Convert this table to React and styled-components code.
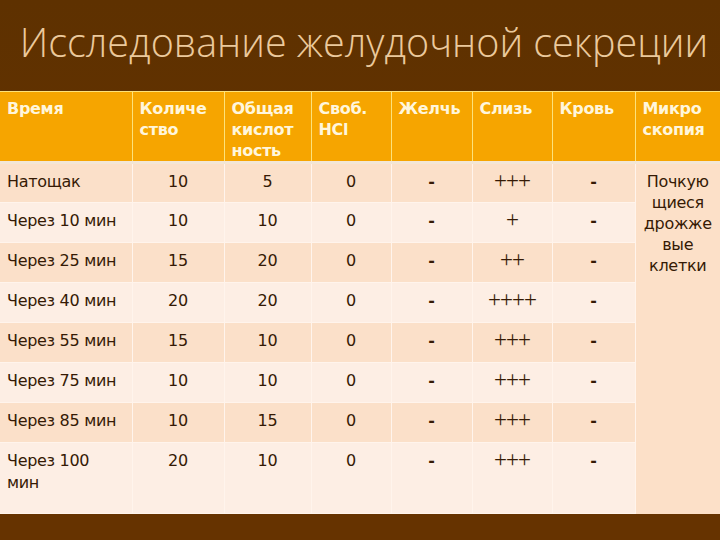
import React from 'react';
import styled, { createGlobalStyle } from 'styled-components';

const GlobalStyle = createGlobalStyle`
  html, body {
    margin: 0;
    padding: 0;
    background: #663300;
  }
`;

const Slide = styled.div`
  width: 720px;
  height: 540px;
  background: linear-gradient(180deg, #5e3100 0%, #663300 60%, #663300 100%);
  display: flex;
  flex-direction: column;
  overflow: hidden;
`;

const Title = styled.h1`
  margin: 0;
  height: 91px;
  display: flex;
  align-items: center;
  justify-content: center;
  padding: 0 0 8px 8px;
  box-sizing: border-box;
  white-space: nowrap;
  font-family: "Open Sans", "Liberation Sans", sans-serif;
  font-weight: 300;
  font-size: 39.5px;
  color: #ebc99c;
`;

const Table = styled.table`
  width: 720px;
  table-layout: fixed;
  border-collapse: collapse;
  font-family: "DejaVu Sans", "Liberation Sans", sans-serif;
`;

const HeadCell = styled.th`
  background: #f6a500;
  color: #fff6dc;
  font-size: 16px;
  font-weight: bold;
  text-align: left;
  vertical-align: top;
  line-height: 21px;
  height: 70px;
  padding: 6px 0 0 7px;
  box-sizing: border-box;
  border-left: 1.5px solid #fde27a;
  border-top: 1px solid #fde27a;
  border-bottom: 3px solid #f3e6d6;
  letter-spacing: -0.3px;
  white-space: nowrap;
  &:first-child {
    border-left: none;
  }
`;

const Row = styled.tr`
  background: ${p => (p.$alt ? '#fdeee4' : '#fbe0c9')};
`;

const Cell = styled.td`
  height: ${p => (p.$tall ? 71 : 40)}px;
  padding: ${p => (p.$plus ? 6 : 7)}px 0 0 ${p => (p.$left ? 7 : 0)}px;
  box-sizing: border-box;
  vertical-align: top;
  text-align: ${p => (p.$left ? 'left' : 'center')};
  color: #351a05;
  font-size: ${p => (p.$plus ? 23 : 16)}px;
  font-weight: ${p => (p.$dash ? 'bold' : 'normal')};
  font-family: ${p => (p.$plus ? '"Liberation Serif", serif' : 'inherit')};
  line-height: 22px;
  letter-spacing: ${p => (p.$plus ? '-1px' : '-0.3px')};
  border-left: 1.5px solid #fff4ec;
  border-bottom: 1.5px solid #fff4ec;
  &:first-child {
    border-left: none;
  }
`;

const MicroCell = styled.td`
  background: #fce0c8;
  vertical-align: top;
  text-align: center;
  color: #351a05;
  font-size: 16px;
  line-height: 21px;
  letter-spacing: -0.3px;
  padding: 7px 0 0;
  border-left: 1.5px solid #fff4ec;
`;

const Footer = styled.div`
  flex: 1;
  background: #663300;
`;

const rows = [
  ['Натощак', '10', '5', '0', '-', '+++', '-'],
  ['Через 10 мин', '10', '10', '0', '-', '+', '-'],
  ['Через 25 мин', '15', '20', '0', '-', '++', '-'],
  ['Через 40 мин', '20', '20', '0', '-', '++++', '-'],
  ['Через 55 мин', '15', '10', '0', '-', '+++', '-'],
  ['Через 75 мин', '10', '10', '0', '-', '+++', '-'],
  ['Через 85 мин', '10', '15', '0', '-', '+++', '-'],
  ['Через 100 мин', '20', '10', '0', '-', '+++', '-'],
];

const widths = [132, 92, 87, 80, 81, 80, 83, 85];

const headers = [
  ['Время'],
  ['Количе', 'ство'],
  ['Общая', 'кислот', 'ность'],
  ['Своб.', 'HCl'],
  ['Желчь'],
  ['Слизь'],
  ['Кровь'],
  ['Микро', 'скопия'],
];

export default function App() {
  return (
    <>
      <GlobalStyle />
      <Slide>
        <Title>Исследование желудочной секреции</Title>
        <Table>
          <colgroup>
            {widths.map((w, i) => (
              <col key={i} style={{ width: w }} />
            ))}
          </colgroup>
          <thead>
            <tr>
              {headers.map((h, i) => (
                <HeadCell key={i}>
                  {h.map((line, j) => (
                    <React.Fragment key={j}>
                      {j > 0 && <br />}
                      {line}
                    </React.Fragment>
                  ))}
                </HeadCell>
              ))}
            </tr>
          </thead>
          <tbody>
            {rows.map((r, i) => (
              <Row key={i} $alt={i % 2 === 1}>
                {r.map((v, j) => (
                  <Cell
                    key={j}
                    $left={j === 0}
                    $plus={j === 5}
                    $dash={v === '-'}
                    $tall={i === rows.length - 1}
                  >
                    {i === rows.length - 1 && j === 0 ? (
                      <>Через 100<br />мин</>
                    ) : (
                      v
                    )}
                  </Cell>
                ))}
                {i === 0 && (
                  <MicroCell rowSpan={rows.length}>
                    Почкую<br />щиеся<br />дрожже<br />вые<br />клетки
                  </MicroCell>
                )}
              </Row>
            ))}
          </tbody>
        </Table>
        <Footer />
      </Slide>
    </>
  );
}
